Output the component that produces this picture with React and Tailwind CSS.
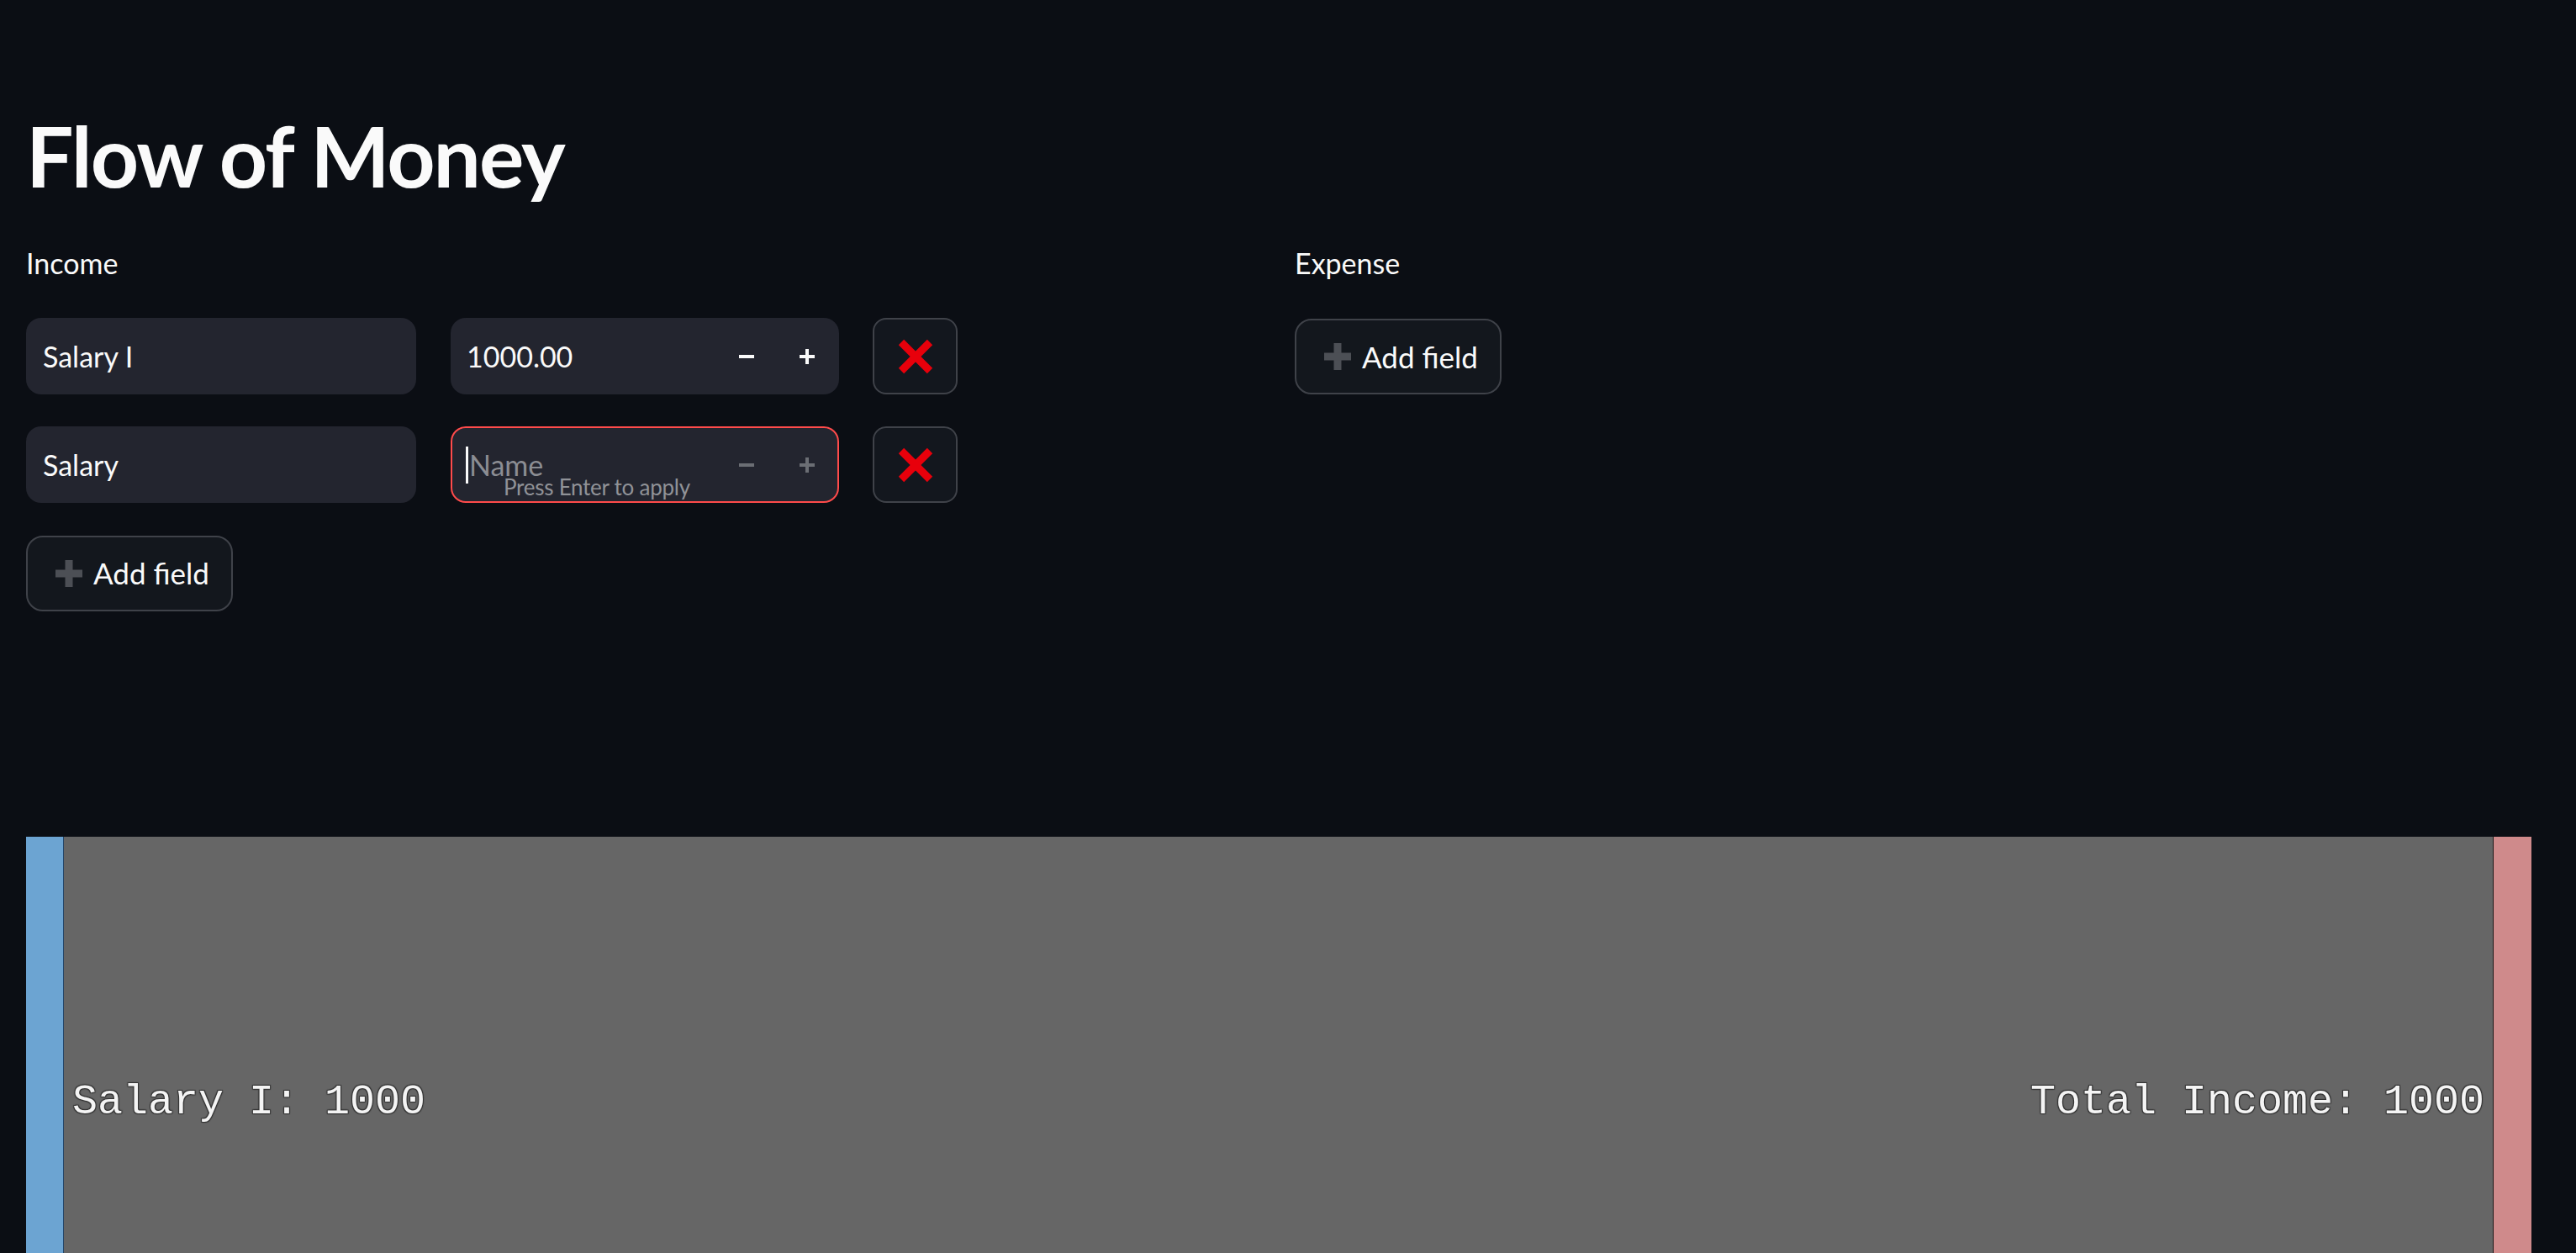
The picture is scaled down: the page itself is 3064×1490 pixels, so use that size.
import React from "react";

function PlusIcon() {
  return (
    <svg width="32" height="32" viewBox="0 0 32 32" className="shrink-0">
      <rect x="11.5" y="0" width="9" height="32" fill="#4c4f55" />
      <rect x="0" y="11.5" width="32" height="9" fill="#4c4f55" />
    </svg>
  );
}

function RedX() {
  return (
    <svg width="42" height="42" viewBox="0 0 42 42">
      <line x1="4" y1="4" x2="38" y2="38" stroke="#e8000b" strokeWidth="9" strokeLinecap="butt" />
      <line x1="38" y1="4" x2="4" y2="38" stroke="#e8000b" strokeWidth="9" strokeLinecap="butt" />
    </svg>
  );
}

function Stepper({ dim }) {
  const c = dim ? "#6b6e74" : "#fafafa";
  return (
    <div className="flex items-center gap-[54px] pr-[29px]">
      <svg width="18" height="18" viewBox="0 0 18 18">
        <rect x="0" y="7" width="18" height="4" fill={c} />
      </svg>
      <svg width="18" height="18" viewBox="0 0 18 18">
        <rect x="0" y="7" width="18" height="4" fill={c} />
        <rect x="7" y="0" width="4" height="18" fill={c} />
      </svg>
    </div>
  );
}

function DeleteButton() {
  return (
    <button className="w-[101px] h-full rounded-[16px] border-2 border-[#3f4249] bg-[#13171e] flex items-center justify-center">
      <RedX />
    </button>
  );
}

function AddField() {
  return (
    <button className="w-[246px] h-[90px] rounded-[20px] border-2 border-[#3f4249] bg-[#13171d] flex items-center gap-[13px] pl-[33px] text-[35px] text-[#fafafa]">
      <PlusIcon />
      <span className="leading-none">Add field</span>
    </button>
  );
}

export default function App() {
  return (
    <div className="h-[1490px] overflow-hidden bg-[#0b0e14] text-[#fafafa] font-['Lato',sans-serif]">
      <div className="px-[31px]">
        <h1 className="mt-[124px] h-[120px] leading-[120px] text-[100px] font-bold tracking-[-0.02em]">
          Flow of Money
        </h1>

        <div className="mt-[49px] grid grid-cols-2 gap-x-4">
          <div className="flex flex-col">
            <div className="h-[40px] leading-[40px] text-[34px]">Income</div>
            <div className="mt-[45px] flex flex-col gap-[38px]">
              <div className="flex h-[91px] items-stretch">
                <div className="w-[464px] rounded-[18px] bg-[#23252f] flex items-center pl-[20px] text-[34px]">
                  Salary I
                </div>
                <div className="ml-[41px] w-[462px] rounded-[18px] bg-[#23252f] flex items-center justify-between pl-[19px] text-[34px]">
                  <span>1000.00</span>
                  <Stepper />
                </div>
                <div className="ml-[40px]">
                  <DeleteButton />
                </div>
              </div>

              <div className="flex h-[91px] items-stretch">
                <div className="w-[464px] rounded-[18px] bg-[#23252f] flex items-center pl-[20px] text-[34px]">
                  Salary
                </div>
                <div className="relative ml-[41px] w-[462px] rounded-[18px] border-2 border-[#ff4b4b] bg-[#23252f] flex items-center justify-between pl-[16px] text-[34px]">
                  <div className="flex items-center">
                    <span className="w-[3px] h-[44px] bg-[#fafafa] mr-[1px]" />
                    <span className="text-[#8b8d93] leading-[40px]">Name</span>
                  </div>
                  <div className="mr-[-2px]">
                    <Stepper dim />
                  </div>
                  <span className="absolute left-[61px] top-[56px] text-[26px] leading-[28px] tracking-[-0.01em] text-[#909297]">
                    Press Enter to apply
                  </span>
                </div>
                <div className="ml-[40px]">
                  <DeleteButton />
                </div>
              </div>

              <div className="flex h-[91px] items-center">
                <AddField />
              </div>
            </div>
          </div>

          <div className="flex flex-col">
            <div className="h-[40px] leading-[40px] text-[34px]">Expense</div>
            <div className="mt-[46px]">
              <AddField />
            </div>
          </div>
        </div>

        <div className="mt-[268px] flex h-[632px] pr-[22px]">
          <div className="w-[45px] bg-[#6ca4d2] border-r border-[#23466a]" />
          <div className="flex-1 bg-[#666666] flex items-center justify-between px-[10px] font-['Liberation_Mono',monospace] text-[50px] leading-[50px] text-[#f4f4f4] [text-shadow:1px_1px_1px_#333,-1px_-1px_1px_#333,1px_-1px_1px_#333,-1px_1px_1px_#333]">
            <span className="whitespace-pre">Salary I: 1000</span>
            <span className="whitespace-pre">Total Income: 1000</span>
          </div>
          <div className="w-[46px] bg-[#cf8a8b] border-l border-[#1a1a1a]" />
        </div>
      </div>
    </div>
  );
}
